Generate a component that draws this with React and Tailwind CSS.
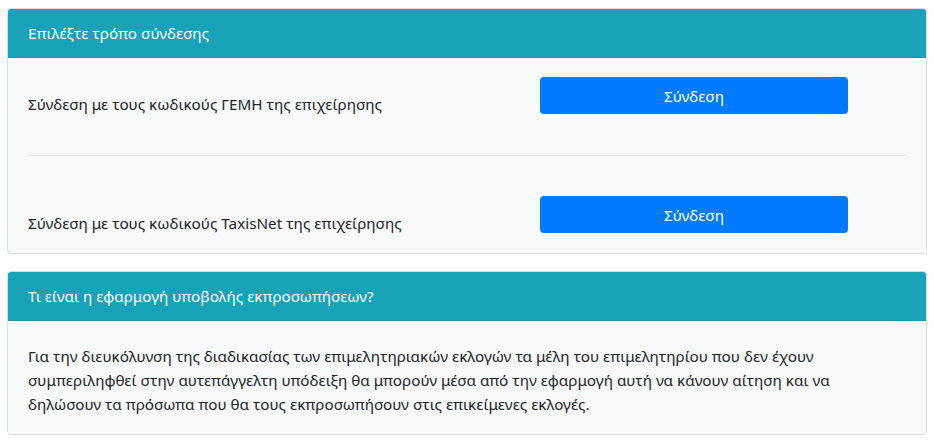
export default function App() {
  return (
    <div className="min-h-screen bg-white px-[7px] pt-[8px] text-[#212529] text-[15.25px] leading-[24px]" style={{ fontFamily: '"Noto Sans", "Open Sans", sans-serif' }}>
      <div className="rounded-[4px] border border-[#dcdcdc] bg-[#f8f9fa] overflow-hidden">
        <div className="bg-[#17a2b8] text-white px-[20px] py-[12px] border-b border-[#1596aa]">Επιλέξτε τρόπο σύνδεσης</div>
        <div className="px-[20px] pt-[19px] pb-[18px]">
          <div className="flex">
            <p className="w-[512px] pt-[15px]">Σύνδεση με τους κωδικούς ΓΕΜΗ της επιχείρησης</p>
            <div className="w-[308px]">
              <button className="w-full h-[37px] rounded-[4px] bg-[#007bff] text-white">Σύνδεση</button>
            </div>
          </div>
          <hr className="mt-[39px] mb-[40px] border-t border-[#e0e2e4]" />
          <div className="flex">
            <p className="w-[512px] pt-[15px]">Σύνδεση με τους κωδικούς TaxisNet της επιχείρησης</p>
            <div className="w-[308px]">
              <button className="w-full h-[37px] rounded-[4px] bg-[#007bff] text-white">Σύνδεση</button>
            </div>
          </div>
        </div>
      </div>
      <div className="mt-[17px] rounded-[4px] border border-[#dcdcdc] bg-[#f8f9fa] overflow-hidden">
        <div className="bg-[#17a2b8] text-white px-[20px] py-[12px] border-b border-[#1596aa]">Τι είναι η εφαρμογή υποβολής εκπροσωπήσεων?</div>
        <div className="px-[20px] pt-[23px] pb-[18px]">
          <p className="pr-[60px]">Για την διευκόλυνση της διαδικασίας των επιμελητηριακών εκλογών τα μέλη του επιμελητηρίου που δεν έχουν συμπεριληφθεί στην αυτεπάγγελτη υπόδειξη θα μπορούν μέσα από την εφαρμογή αυτή να κάνουν αίτηση και να δηλώσουν τα πρόσωπα που θα τους εκπροσωπήσουν στις επικείμενες εκλογές.</p>
        </div>
      </div>
    </div>
  );
}
